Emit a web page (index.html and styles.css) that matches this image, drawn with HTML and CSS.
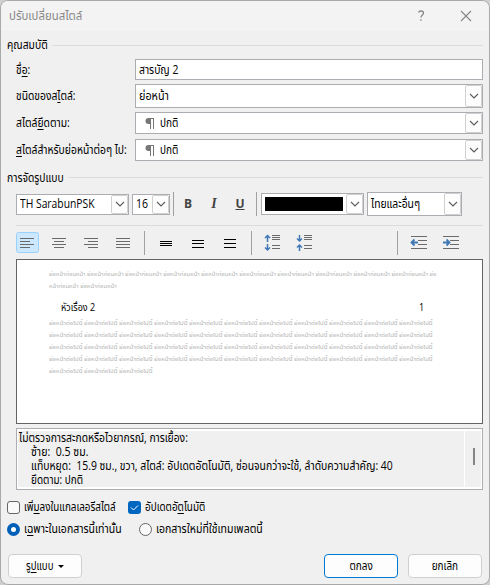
FILE: index.html
```html
<!DOCTYPE html>
<html lang="th">
<head>
<meta charset="utf-8">
<title>ปรับเปลี่ยนสไตล์</title>
<link rel="stylesheet" href="styles.css">
</head>
<body>
<svg width="0" height="0" class="defs">
  <symbol id="chev" viewBox="0 0 10 6"><path d="M1 1l4 4 4-4" fill="none" stroke="#5c5c5c" stroke-width="1.1"/></symbol>
  <symbol id="pilcrow" viewBox="0 0 10 11"><path d="M5 0H3.500a3 3 0 0 0 0 6H5z" fill="#777"/><path d="M4 .5h5M5.500 0v11M8.500 0v11" fill="none" stroke="#777"/></symbol>
</svg>
<main class="dialog">
  <header class="titlebar">
    <h1 class="title"><span>ปรับเปลี่ยนสไตล์</span></h1>
    <svg class="help" width="8" height="12" viewBox="0 0 8 12"><path d="M1.500 2.500Q2 1 4 1q2.500 0 2.500 2c0 2-2.500 2-2.500 4.500M4 9.200v1.600" fill="none" stroke="#858585" stroke-width="1.300"/></svg>
    <svg class="close" width="12" height="12" viewBox="0 0 12 12"><path d="M1 1l10 10M11 1L1 11" stroke="#858585" stroke-width="1.100"/></svg>
  </header>

  <h2 class="group g1"><span>คุณสมบัติ</span></h2>
  <section class="fields">
    <label class="l1"><span>ชื่<u>อ</u>:</span></label><div class="box f1"><span class="v1">สารบัญ 2</span></div>
    <label class="l2"><span>ชนิดของส<u>ไ</u>ตล์:</span></label><div class="box f2"><span class="v2">ย่อหน้า</span><i class="drop"><svg width="10" height="6"><use href="#chev"/></svg></i></div>
    <label class="l3"><span>สไตล์<u>ยึ</u>ดตาม:</span></label><div class="box f3"><svg class="pil" width="10" height="11"><use href="#pilcrow"/></svg><span class="v3">ปกติ</span><i class="drop"><svg width="10" height="6"><use href="#chev"/></svg></i></div>
    <label class="l4"><span><u>ส</u>ไตล์สำหรับย่อหน้าต่อๆ ไป:</span></label><div class="box f4"><svg class="pil" width="10" height="11"><use href="#pilcrow"/></svg><span class="v3">ปกติ</span><i class="drop"><svg width="10" height="6"><use href="#chev"/></svg></i></div>
  </section>

  <h2 class="group g2"><span>การจัดรูปแบบ</span></h2>
  <section class="fontbar">
    <div class="box font"><span class="vf">TH SarabunPSK</span><i class="drop"><svg width="10" height="6"><use href="#chev"/></svg></i></div>
    <div class="box size"><span class="vs">16</span><i class="drop"><svg width="10" height="6"><use href="#chev"/></svg></i></div>
    <i class="sep"></i>
    <b class="ltr">B</b><b class="ltr it">I</b><b class="ltr un">U</b>
    <i class="sep s2"></i>
    <div class="box color"><i class="swatch"></i><i class="drop"><svg width="10" height="6"><use href="#chev"/></svg></i></div>
    <div class="box lang"><span class="vl">ไทยและอื่นๆ</span><i class="drop"><svg width="10" height="6"><use href="#chev"/></svg></i></div>
  </section>

  <section class="parabar">
    <svg width="467" height="26" viewBox="16 230 467 26" fill="none">
      <rect x="16.500" y="232.500" width="22" height="20" rx="2" fill="#cce8ff" stroke="#99d1ff"/>
      <g stroke="#6a6a6a">
        <path d="M20 238.500h14M20 241.500h10M20 244.500h14M20 247.500h10"/>
        <path d="M52 238.500h14M54 241.500h10M52 244.500h14M54 247.500h10"/>
        <path d="M84 238.500h14M88 241.500h10M84 244.500h14M88 247.500h10"/>
        <path d="M116 238.500h14M116 241.500h14M116 244.500h14M116 247.500h14"/>
      </g>
      <path d="M144.500 231v24M251.500 231v24M397.500 231v24" stroke="#a0a0a0"/>
      <path d="M160 241.500h12M160 243.500h12M160 245.500h12M192 240.500h12M192 243.500h12M192 247.500h12M224 239.500h12M224 243.500h12M224 247.500h12" stroke="#000"/>
      <path d="M272 235.500h8M272 237.500h8M272 239.500h8M272 245.500h8M272 248.500h8M304 235.500h8M304 237.500h8M304 239.500h8M304 245.500h8M304 248.500h8M411 236.500h16M418 240.500h9M418 244.500h9M411 248.500h16M443 236.500h16M450 240.500h9M450 244.500h9M443 248.500h16" stroke="#6a6a6a"/>
      <g stroke="#3f78b5" stroke-width="1.500">
        <path d="M267.500 242v-6M265 238l2.500-2.500 2.500 2.500M267.500 244v6M265 247.500l2.500 2.500 2.500-2.500"/>
        <path d="M299.500 235v6M297 238.500l2.500 2.500 2.500-2.500M299.500 251v-6M297 247.500l2.500-2.500 2.500 2.500"/>
        <path d="M418 242.500h-6M414.500 239.500l-3 3 3 3M443 242.500h6M446.500 239.500l3 3-3 3" stroke-width="1.800"/>
      </g>
    </svg>
  </section>

  <section class="preview">
    <p class="grey before"><span>ย่อหน้าก่อนหน้า ย่อหน้าก่อนหน้า ย่อหน้าก่อนหน้า ย่อหน้าก่อนหน้า ย่อหน้าก่อนหน้า ย่อหน้าก่อนหน้า ย่อหน้าก่อนหน้า ย่อหน้าก่อนหน้า ย่อหน้าก่อนหน้า ย่อหน้าก่อนหน้า ย่อ</span></p>
    <p class="grey before"><span>หน้าก่อนหน้า ย่อหน้าก่อนหน้า</span></p>
    <p class="sample"><span>หัวเรื่อง 2</span><span>1</span></p>
    <p class="grey after"><span>ย่อหน้าต่อไปนี้ ย่อหน้าต่อไปนี้ ย่อหน้าต่อไปนี้ ย่อหน้าต่อไปนี้ ย่อหน้าต่อไปนี้ ย่อหน้าต่อไปนี้ ย่อหน้าต่อไปนี้ ย่อหน้าต่อไปนี้ ย่อหน้าต่อไปนี้ ย่อหน้าต่อไปนี้ ย่อหน้าต่อไปนี้</span></p>
    <p class="grey after"><span>ย่อหน้าต่อไปนี้ ย่อหน้าต่อไปนี้ ย่อหน้าต่อไปนี้ ย่อหน้าต่อไปนี้ ย่อหน้าต่อไปนี้ ย่อหน้าต่อไปนี้ ย่อหน้าต่อไปนี้ ย่อหน้าต่อไปนี้ ย่อหน้าต่อไปนี้ ย่อหน้าต่อไปนี้ ย่อหน้าต่อไปนี้</span></p>
    <p class="grey after"><span>ย่อหน้าต่อไปนี้ ย่อหน้าต่อไปนี้ ย่อหน้าต่อไปนี้ ย่อหน้าต่อไปนี้ ย่อหน้าต่อไปนี้ ย่อหน้าต่อไปนี้ ย่อหน้าต่อไปนี้ ย่อหน้าต่อไปนี้ ย่อหน้าต่อไปนี้ ย่อหน้าต่อไปนี้ ย่อหน้าต่อไปนี้</span></p>
    <p class="grey after"><span>ย่อหน้าต่อไปนี้ ย่อหน้าต่อไปนี้ ย่อหน้าต่อไปนี้ ย่อหน้าต่อไปนี้ ย่อหน้าต่อไปนี้ ย่อหน้าต่อไปนี้ ย่อหน้าต่อไปนี้ ย่อหน้าต่อไปนี้ ย่อหน้าต่อไปนี้ ย่อหน้าต่อไปนี้ ย่อหน้าต่อไปนี้</span></p>
    <p class="grey after"><span>ย่อหน้าต่อไปนี้ ย่อหน้าต่อไปนี้ ย่อหน้าต่อไปนี้</span></p>
  </section>

  <section class="desc">
    <div class="desctext">
      <p class="d1"><span>ไม่ตรวจการสะกดหรือไวยากรณ์, การเยื้อง:</span></p>
      <p class="ind d2"><span>ซ้าย:&nbsp; 0.5 ซม.</span></p>
      <p class="ind d3"><span>แท็บหยุด:&nbsp; 15.9 ซม., ขวา, สไตล์: อัปเดตอัตโนมัติ, ซ่อนจนกว่าจะใช้, ลำดับความสำคัญ: 40</span></p>
      <p class="ind d4"><span>ยึดตาม: ปกติ</span></p>
    </div>
    <div class="scroll"><i></i></div>
  </section>

  <section class="opts">
    <i class="check"></i><span class="o1">เพิ่<u>ม</u>ลงในแกลเลอรีสไตล์</span>
    <i class="check on"><svg width="13" height="13" viewBox="0 0 13 13"><path d="M3 6.500l2.500 2.500L10 4.500" fill="none" stroke="#fff"/></svg></i><span class="o2">อัปเดตอั<u>ต</u>โนมัติ</span>
  </section>
  <section class="opts r2">
    <i class="radio on"></i><span class="o3">เ<u>ฉ</u>พาะในเอกสารนี้เท่านั้น</span>
    <i class="radio"></i><span class="o4">เอกสารใหม่ที่ใช้เทมเพลตนี้</span>
  </section>
  <footer class="foot">
    <button class="fmt"><span class="b1">รู<u>ป</u>แบบ</span><i class="tri"></i></button>
    <button class="ok"><span class="b2">ตกลง</span></button>
    <button class="cancel"><span class="b3">ยกเลิก</span></button>
  </footer>
</main>
</body>
</html>
```
FILE: styles.css
```css
* { box-sizing: border-box; }
body { margin: 0; width: 490px; height: 585px; overflow: hidden; background: #cfcfcf; font: 12px/16px "Open Sans", "Noto Sans Thai", "Noto Sans", "Liberation Sans", sans-serif; color: #000; }
.defs { position: absolute; }
h1, h2, p { margin: 0; font-size: inherit; font-weight: 400; }
/* Condensed interface face */
span { display: inline-block; white-space: nowrap; transform: scaleX(.86); transform-origin: 0 50%; }
u { text-underline-offset: 2px; }
.dialog { width: 490px; height: 585px; border: 1px solid #a9a9a9; border-radius: 8px; background: #f0f0f0; overflow: hidden; display: flex; flex-direction: column; }
.titlebar { height: 30px; flex: none; background: #f3f3f3; display: flex; align-items: center; padding: 0 17px 0 8px; color: #888; }
.title { flex: 1; }
.title span { transform: scaleX(.95); }
.close { margin-left: 35px; }
.group { height: 28px; flex: none; display: flex; align-items: center; padding: 0 6px; }
.group::after { content: ""; flex: 1; height: 1px; background: #dcdcdc; }
.g1 span { width: 45px; }
.g2 span { width: 61px; }
.fields { display: grid; grid-template-columns: 119px 348px; grid-template-rows: 21px 24px 22px 22px; row-gap: 4px; padding-left: 15px; align-items: center; }
.l4, .f4 { position: relative; top: 1px; }
.box { background: #fff; border: 1px solid #abadb3; height: 100%; display: flex; align-items: center; padding-left: 3px; }
.drop { margin-left: auto; width: 17px; height: 100%; border: 1px solid #d0d0d0; border-radius: 2px; display: flex; align-items: center; justify-content: center; background: #fdfdfd; flex: none; }
.pil { margin: 0 5px 0 6px; }
.v2 { transform: scaleX(.9); }
.v3 { transform: scaleX(.83); }
.g2 { margin-top: 3px; height: 29px; }
.fontbar { display: flex; align-items: center; height: 24px; padding-left: 15px; flex: none; }
.font { width: 113px; height: 21px; }
.vf { width: 80px; }
.vs { transform: scaleX(.88); width: 14px; }
.size { width: 38px; height: 21px; margin-left: 3px; }
.color { width: 103px; height: 22px; margin-left: 4px; }
.lang { width: 95px; height: 24px; margin-left: 3px; }
.swatch { width: 78px; height: 14px; background: #000; }
.sep { width: 1px; height: 24px; background: #a0a0a0; margin-left: 3px; }
.ltr { width: 26px; text-align: center; color: #444; }
.sep + .ltr { margin-left: 1px; }
.it { font-style: italic; font-family: "Liberation Serif", serif; font-size: 14px; }
.un { text-decoration: underline; }
.parabar { margin: 9px 6px 0 15px; border-top: 1px solid #dcdcdc; padding-top: 4px; height: 34px; flex: none; }
.parabar svg { display: block; }
.preview { margin: 0 6px 0 15px; width: 467px; height: 165px; flex: none; border: 1px solid #646464; background: #fff; padding: 8px 0 0 32px; }
.grey { color: #b2b2b2; font-size: 6px; line-height: 12px; height: 12px; }
.grey span { vertical-align: top; }
.before span { transform: scaleX(.987); }
.after span { transform: scaleX(1.014); }
.sample { font-size: 10px; line-height: 20px; height: 25px; padding: 5px 57px 0 12px; display: flex; justify-content: space-between; }
.sample span { transform: scaleX(.9); }
.desc { margin: 4px 6px 0 15px; width: 467px; height: 62px; flex: none; border: 1px solid #abadb3; background: #fff; padding: 2px 1px 2px 1px; display: flex; gap: 1px; }
.desctext { width: 446px; flex: none; background: #f0f0f0; line-height: 14px; padding: 0 1px; }
.desctext p { height: 14px; }
.desctext span { vertical-align: top; }
.ind { padding-left: 12px; }
.d2 span { transform: scaleX(.88); }
.d3 span { transform: scaleX(.866); width: 420px; }
.d4 span { transform: scaleX(.83); }
.scroll { flex: 1; background: #f0f0f0; padding: 17px 0 0 8px; }
.scroll i { display: block; width: 2px; height: 17px; background: #858585; }
.opts { display: flex; align-items: center; height: 22px; margin-top: 6px; padding-left: 6px; flex: none; }
.r2 { margin-top: 0; }
.o1 { width: 104px; transform: scaleX(.82); }
.o2 { transform: scaleX(.825); }
.o3 { width: 115px; transform: scaleX(.875); }
.o4 { transform: scaleX(.876); }
.check, .radio { width: 13px; height: 13px; border: 1px solid #666; border-radius: 3px; background: #fafafa; margin-right: 4px; flex: none; }
.radio { border-radius: 50%; }
.check.on { background: #0067c0; border: 0; display: flex; }
.radio.on { border: 4px solid #0060b8; background: #fff; }
.foot { display: flex; padding: 14px 7px 0; align-items: flex-start; }
button { height: 24px; width: 74px; border: 1px solid #d0d0d0; border-radius: 4px; background: #fdfdfd; color: #000; font: inherit; padding: 0; display: flex; align-items: center; justify-content: center; gap: 3px; }
.fmt span { width: 29px; transform: scaleX(.8); }
.ok { margin-left: 242px; border-color: #0078d4; }
.ok span, .cancel span { transform: scaleX(.83); transform-origin: 50% 50%; }
.cancel { margin-left: 10px; }
.tri { border: 3px solid transparent; border-top-color: #000; border-bottom: 0; }
```
